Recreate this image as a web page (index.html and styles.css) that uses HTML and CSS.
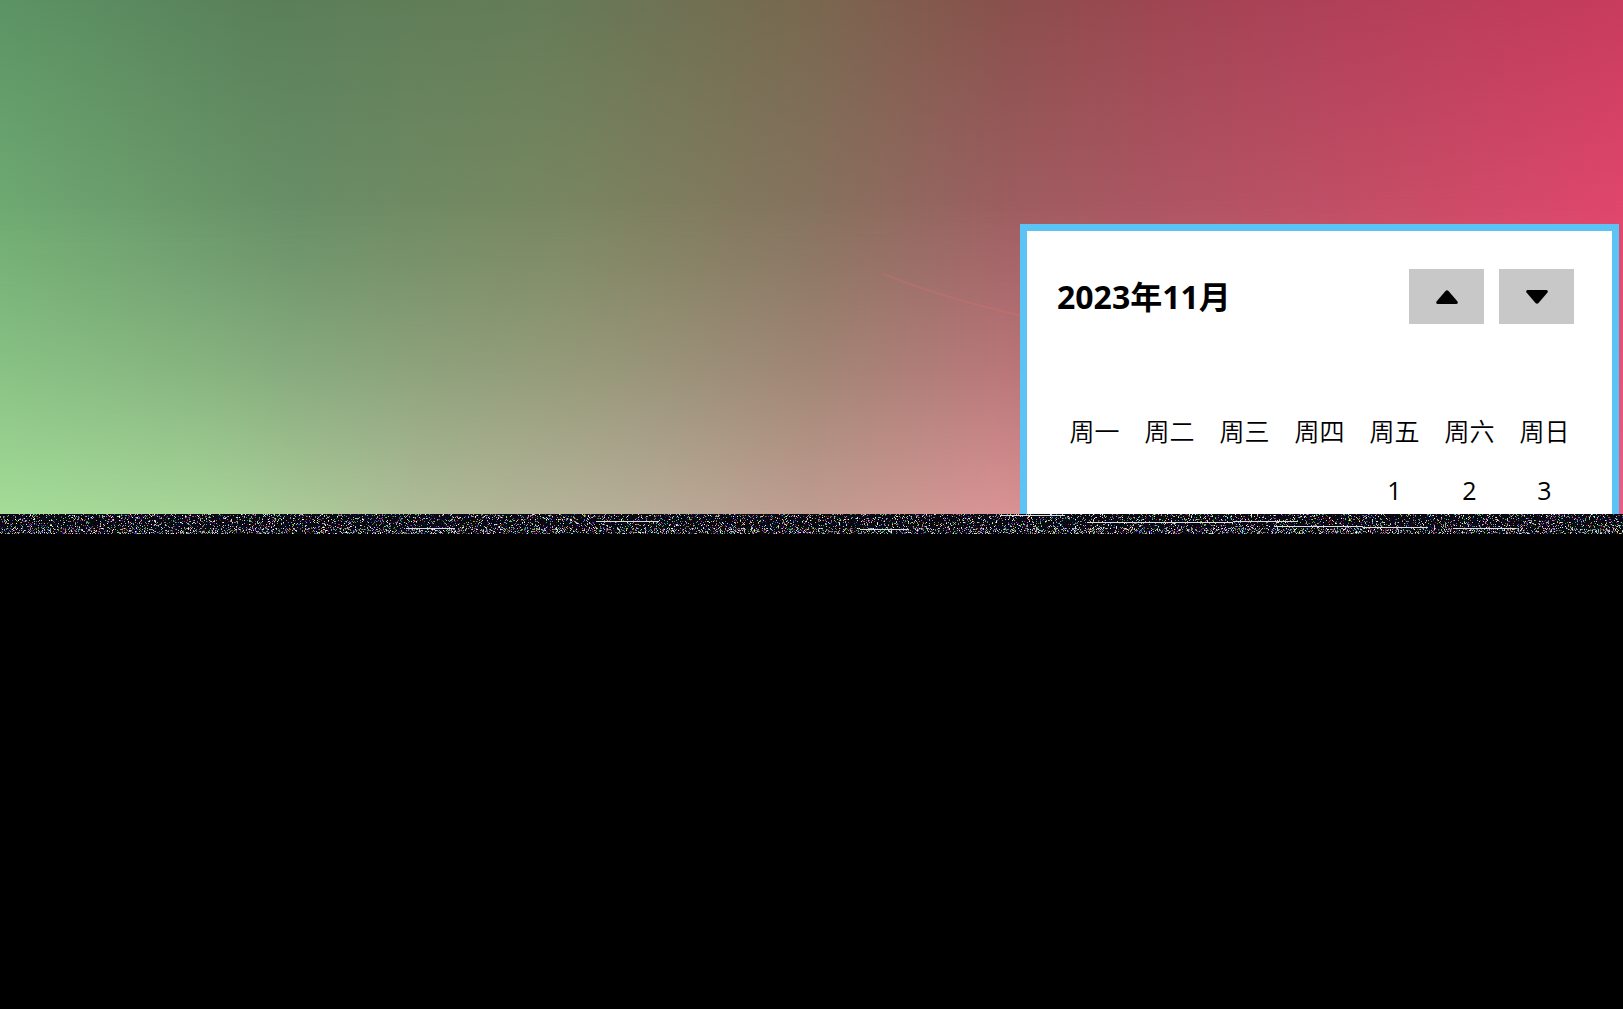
FILE: index.html
```
<!DOCTYPE html>
<html lang="zh-CN">
<head>
    <meta charset="UTF-8">
    <meta name="viewport" content="width=device-width, initial-scale=1.0">
    <title>日历</title>
    <link rel="stylesheet" href="styles.css">
</head>
<body>
    <main class="desktop">
        <svg class="streak" viewBox="0 0 160 50" aria-hidden="true">
            <path d="M20 6Q80 30 160 48" fill="none" stroke="#d87070" stroke-opacity="0.3" stroke-width="2"/>
        </svg>
        <section class="calendar">
            <div class="calendar-header">
                <h2>2023年11月</h2>
                <div class="calendar-nav">
                    <button type="button" aria-label="上个月">
                        <svg width="22" height="14" viewBox="0 0 22 14"><path d="M9.5 1Q11-.5 12.5 1L21.5 11.5Q22.5 14 20 14H2Q-.5 14 .5 11.5Z"/></svg>
                    </button>
                    <button type="button" aria-label="下个月">
                        <svg width="22" height="14" viewBox="0 0 22 14"><path d="M9.5 13Q11 14.5 12.5 13L21.5 2.5Q22.5 0 20 0H2Q-.5 0 .5 2.5Z"/></svg>
                    </button>
                </div>
            </div>
            <table class="calendar-grid">
                <thead>
                    <tr>
                        <th>周一</th>
                        <th>周二</th>
                        <th>周三</th>
                        <th>周四</th>
                        <th>周五</th>
                        <th>周六</th>
                        <th>周日</th>
                    </tr>
                </thead>
                <tbody>
                    <tr>
                        <td></td>
                        <td></td>
                        <td></td>
                        <td></td>
                        <td>1</td>
                        <td>2</td>
                        <td>3</td>
                    </tr>
                </tbody>
            </table>
        </section>
    </main>
    <canvas class="noise" id="noise" height="20"></canvas>

    <script src="noise.js"></script>
</body>
</html>
```
FILE: styles.css
```
body {
    margin: 0;
    background-color: #000000;
    color: #000000;
    font-family: "Open Sans", "Noto Sans CJK SC", sans-serif;
}

/* Wallpaper: three colour bands that fade into each other */
.desktop {
    position: relative;
    display: flex;
    justify-content: flex-end;
    padding: 224px 4px 0 0;
    overflow: hidden;
    background: linear-gradient(to right, #5c9465 0%, #5a8059 16%, #657c58 33%, #796850 50%, #8a504c 62%, #9e4652 71%, #b04058 82%, #c83c5c 100%);
}

.desktop::before,
.desktop::after {
    content: "";
    position: absolute;
    inset: 0;
}

.desktop::before {
    background: linear-gradient(to right, #72ad74 0%, #6a9169 18%, #7c8862 35%, #887460 50%, #a06064 62%, #b05866 72%, #c85068 85%, #e4486e 100%);
    -webkit-mask-image: linear-gradient(to bottom, transparent, #000 48%);
    mask-image: linear-gradient(to bottom, transparent, #000 48%);
}

.desktop::after {
    background: linear-gradient(to right, #a4dc98 0%, #a8d498 13%, #b0bc98 26%, #b8ac98 40%, #c09c90 50%, #d89494 61%, #e46088 100%);
    -webkit-mask-image: linear-gradient(to bottom, transparent 38%, rgba(0, 0, 0, 0.1) 50%, rgba(0, 0, 0, 0.45) 72%, #000);
    mask-image: linear-gradient(to bottom, transparent 38%, rgba(0, 0, 0, 0.1) 50%, rgba(0, 0, 0, 0.45) 72%, #000);
}

.streak {
    position: absolute;
    z-index: 1;
    top: 268px;
    right: 600px;
    width: 160px;
}

.calendar {
    position: relative;
    z-index: 1;
    padding: 38px 30px 0;
    border: 7px solid #5bc4f5;
    border-bottom: none;
    background-color: #ffffff;
}

.calendar-header {
    display: flex;
    justify-content: space-between;
    align-items: center;
    margin-bottom: 76px;
    padding-right: 8px;
}

.calendar-header h2 {
    margin: 0;
    font-size: 32px;
    line-height: 40px;
}

.calendar-nav {
    display: flex;
    gap: 15px;
}

.calendar-nav button {
    display: flex;
    justify-content: center;
    align-items: center;
    width: 75px;
    height: 55px;
    padding: 0;
    border: none;
    background-color: #c8c8c8;
    cursor: pointer;
}

.calendar-nav button:hover {
    background-color: #b8b8b8;
}

.calendar-grid {
    border-collapse: collapse;
    font-size: 25px;
    line-height: 30px;
}

.calendar-grid th,
.calendar-grid td {
    box-sizing: border-box;
    width: 75px;
    height: 60px;
    padding: 0;
    text-align: center;
    font-weight: normal;
}

.calendar-grid th {
    font-family: "Noto Sans CJK SC", sans-serif;
    font-weight: 350;
}

.calendar-grid td {
    height: 54px;
    padding-top: 6px;
}

.noise {
    display: block;
    width: 100%;
    height: 20px;
}
```
FILE: noise.js
```
const canvas = document.getElementById('noise');
const ctx = canvas.getContext('2d');
let seed = 7;

// Fixed seed, so the band looks the same on every load
function random() {
    seed = (seed * 1664525 + 1013904223) % 4294967296;
    return seed / 4294967296;
}

function drawNoise() {
    canvas.width = canvas.clientWidth;
    const w = canvas.width;
    const image = ctx.createImageData(w, 20);

    for (let y = 0; y < 20; y++) {
        const density = y < 14 ? 0.2 : 0.36;
        for (let x = 0; x < w; x++) {
            const i = (y * w + x) * 4;
            const lit = random() < density;
            const white = random() < 0.35;
            const level = 130 + random() * 125;
            for (let c = 0; c < 3; c++) {
                const tint = random() * (lit ? 230 : c === 2 ? 40 : 16);
                image.data[i + c] = lit && white ? level : tint;
            }
            image.data[i + 3] = 255;
        }
    }
    ctx.putImageData(image, 0, 0);

    // Bright scan lines: start, end (share of the width), row
    const lines = [
        [0.616, 0.656, 1], [0.367, 0.406, 7], [0.76, 0.8, 7],
        [0.67, 0.76, 8], [0.785, 0.84, 12], [0.84, 0.88, 13],
        [0.895, 0.934, 14], [0.53, 0.56, 15], [0.25, 0.28, 14]
    ];
    ctx.fillStyle = '#dddddd';
    lines.forEach(([from, to, row]) => {
        ctx.fillRect(Math.round(from * w), row, Math.round((to - from) * w), 1);
    });
}

drawNoise();
```
